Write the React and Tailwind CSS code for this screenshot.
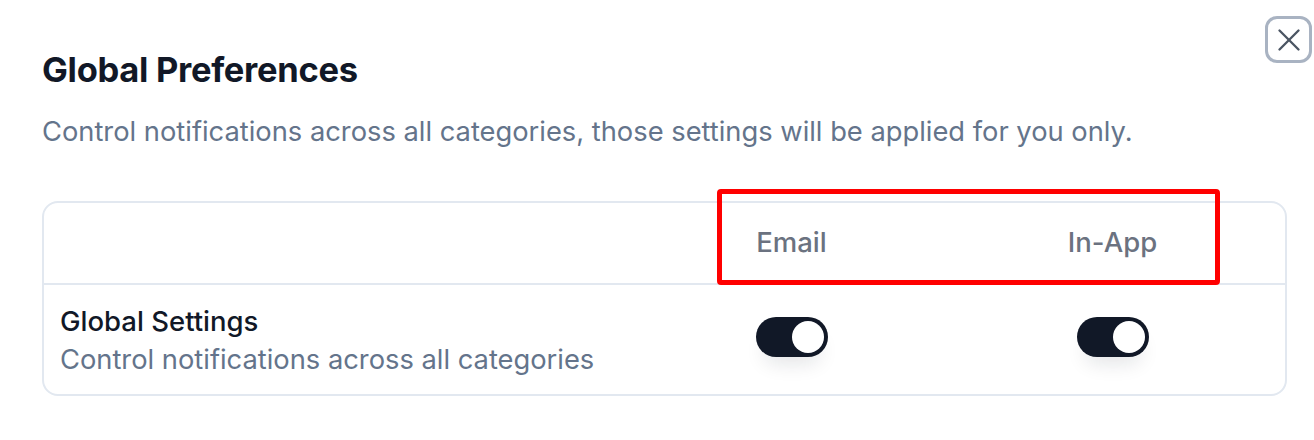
import React, { useState } from 'react';
import { X } from 'lucide-react';

function Toggle({ checked, onChange }) {
  return (
    <button
      type="button"
      onClick={() => onChange(!checked)}
      className={`relative flex h-[40px] w-[72px] items-center rounded-full px-[4px] shadow-[0_14px_20px_-8px_rgba(15,23,42,0.12)] ${
        checked ? 'justify-end bg-[#111827]' : 'justify-start bg-[#e5e7eb]'
      }`}
    >
      <span className="block h-[32px] w-[32px] rounded-full bg-white"></span>
    </button>
  );
}

export default function App() {
  const [email, setEmail] = useState(true);
  const [inApp, setInApp] = useState(true);

  return (
    <div className="relative h-[440px] w-[1314px] bg-white font-['Inter',sans-serif]">
      <button className="absolute right-[2px] top-[16px] flex h-[47px] w-[47px] items-center justify-center rounded-[12px] border-[3px] border-[#a9b3c2] text-[#4b5563]">
        <X size={38} strokeWidth={1.5} />
      </button>

      <div className="px-[42px] pt-[42px]">
        <h2 className="text-[34.5px] font-bold leading-[56px] tracking-[-0.3px] text-[#111827]">
          Global Preferences
        </h2>
        <p className="mt-[14px] text-[27.3px] leading-[40px] text-[#64748b]">
          Control notifications across all categories, those settings will be applied for you only.
        </p>

        <div className="relative mt-[49px] w-[1245px] rounded-[16px] border-2 border-[#e2e8f0]">
          <div className="flex h-[82px] items-center border-b-2 border-[#e2e8f0] pr-[12px]">
            <div className="flex-1"></div>
            <div className="w-[321px] text-center text-[27.5px] font-medium text-[#6b7280]">Email</div>
            <div className="w-[321px] text-center text-[27.5px] font-medium text-[#6b7280]">In-App</div>
          </div>
          <div className="flex h-[109px] items-center pl-[16px] pr-[12px]">
            <div className="flex-1">
              <div className="text-[27.5px] font-medium leading-[40px] text-[#111827]">Global Settings</div>
              <div className="text-[27.3px] leading-[38px] text-[#64748b]">
                Control notifications across all categories
              </div>
            </div>
            <div className="mb-[6px] flex w-[321px] justify-center">
              <Toggle checked={email} onChange={setEmail} />
            </div>
            <div className="mb-[6px] flex w-[321px] justify-center">
              <Toggle checked={inApp} onChange={setInApp} />
            </div>
          </div>

          <div className="pointer-events-none absolute left-[673px] top-[-14px] h-[96px] w-[503px] rounded-[4px] border-[5px] border-[#ff0000]"></div>
        </div>
      </div>
    </div>
  );
}
